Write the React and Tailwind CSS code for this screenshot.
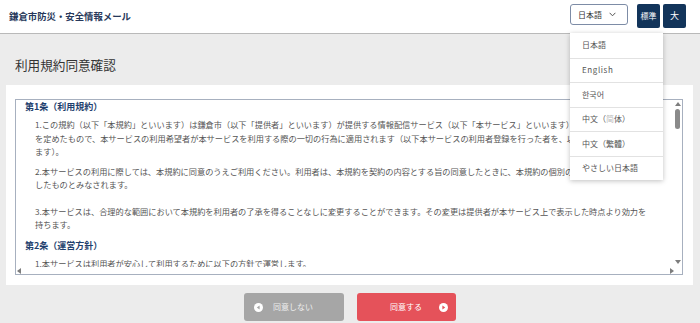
import React from 'react'

const languages = ['日本語', 'English', '한국어', '中文（简体）', '中文（繁體）', 'やさしい日本語']

const Arrow = ({ dir }) => {
  const points = {
    up: '0,4 3,0 6,4',
    down: '0,0 6,0 3,4',
    left: '4,0 4,6 0,3',
    right: '0,0 0,6 4,3',
  }
  const size = dir === 'up' || dir === 'down' ? { w: 6, h: 4 } : { w: 4, h: 6 }
  return (
    <svg width={size.w} height={size.h} viewBox={`0 0 ${size.w} ${size.h}`}>
      <polygon points={points[dir]} fill="#7d7d7d" />
    </svg>
  )
}

const CircleIcon = ({ dir, color }) => (
  <svg width="9" height="9" viewBox="0 0 9 9">
    <circle cx="4.5" cy="4.5" r="4.5" fill="#ffffff" />
    {dir === 'left' ? (
      <polygon points="5.6,2.6 5.6,6.4 2.8,4.5" fill={color} />
    ) : (
      <polygon points="3.4,2.6 3.4,6.4 6.2,4.5" fill={color} />
    )}
  </svg>
)

const LangMenu = () => (
  <div className="absolute left-0 top-[29px] z-20 w-[93px] bg-white shadow-[0_1px_5px_rgba(0,0,0,0.25)]">
    {languages.map((lang, i) => (
      <div
        key={lang}
        className={`flex h-[24.5px] items-center pl-[12px] text-[8px] text-[#555] ${
          i > 0 ? 'border-t border-[#e2e2e2]' : ''
        } ${lang === 'English' ? 'tracking-[0.6px]' : ''}`}
      >
        {lang === '中文（简体）' ? (
          <span>
            中文（<span className="text-[#b9b9b9]">简</span>体）
          </span>
        ) : (
          lang
        )}
      </div>
    ))}
  </div>
)

const Header = () => (
  <header className="flex h-[34px] justify-between border-b border-[#b9b9b9] bg-white">
    <h1 className="self-center pl-[9px] text-[9.4px] font-bold text-[#26385a]">
      鎌倉市防災・安全情報メール
    </h1>
    <div className="mr-[14px] mt-[4px] flex items-start">
      <div className="relative mr-[9px]">
        <div className="flex h-[21px] w-[58px] items-center justify-between rounded-[3px] border border-[#7d8ca6] bg-white pl-[7px] pr-[11px] text-[8px] text-[#333]">
          <span>日本語</span>
          <svg width="7" height="5" viewBox="0 0 7 5">
            <polyline points="0.6,0.8 3.5,3.8 6.4,0.8" fill="none" stroke="#555" strokeWidth="1" />
          </svg>
        </div>
        <LangMenu />
      </div>
      <button
        type="button"
        className="flex h-[24px] w-[23px] items-center justify-center rounded-[2px] bg-[#12345a] text-[8px] text-white"
      >
        標準
      </button>
      <button
        type="button"
        className="ml-[3px] flex h-[24px] w-[23px] items-center justify-center rounded-[2px] bg-[#12345a] text-[9px] text-white"
      >
        大
      </button>
    </div>
  </header>
)

const Terms = () => (
  <div className="flex h-[176px] flex-col border border-[#a7b0bf]">
    <div className="flex min-h-0 flex-1">
      <div className="min-w-0 flex-1 overflow-hidden pl-[9px] pr-[21px] text-[8.2px] leading-[13.5px] text-[#555]">
        <h3 className="text-[9px] font-bold leading-[14px] text-[#1f3f6e]">第1条（利用規約）</h3>
        <p className="mt-[4px] pl-[10px]">
          1.この規約（以下「本規約」といいます）は鎌倉市（以下「提供者」といいます）が提供する情報配信サービス（以下「本サービス」といいます）の利用に関する条件を定めたもので、本サービスの利用希望者が本サービスを利用する際の一切の行為に適用されます（以下本サービスの利用者登録を行った者を、以下「利用者」といいます）。
        </p>
        <p className="mt-[6px] pl-[10px]">
          2.本サービスの利用に際しては、本規約に同意のうえご利用ください。利用者は、本規約を契約の内容とする旨の同意したときに、本規約の個別の規定についても同意したものとみなされます。
        </p>
        <p className="mt-[13px] pl-[10px]">
          3.本サービスは、合理的な範囲において本規約を利用者の了承を得ることなしに変更することができます。その変更は提供者が本サービス上で表示した時点より効力を持ちます。
        </p>
        <h3 className="mt-[7px] text-[9px] font-bold leading-[14px] text-[#1f3f6e]">第2条（運営方針）</h3>
        <p className="mt-[4px] pl-[10px]">
          1.本サービスは利用者が安心して利用するために以下の方針で運営します。
        </p>
      </div>
      <div className="flex w-[9px] flex-col items-center pb-[3px] pt-[2px]">
        <Arrow dir="up" />
        <div className="mt-[3px] h-[20px] w-[5px] rounded-full bg-[#8a8a8a]" />
        <div className="flex-1" />
        <Arrow dir="down" />
      </div>
    </div>
    <div className="flex h-[7px] items-center justify-between pl-[1px] pr-[8px]">
      <Arrow dir="left" />
      <Arrow dir="right" />
    </div>
  </div>
)

export default function App() {
  return (
    <div className="h-[323px] w-full overflow-hidden bg-[#ececec] font-['Noto_Sans_CJK_JP','Noto_Sans_CJK_SC',sans-serif]">
      <Header />
      <main>
        <h2 className="pl-[15px] pt-[22px] text-[12.6px] leading-[18px] text-[#333]">利用規約同意確認</h2>
        <div className="ml-[6px] mr-[7px] mt-[11px] bg-white pb-[10px] pl-[9px] pr-[10px] pt-[14px]">
          <Terms />
        </div>
        <div className="flex justify-center gap-[13px] pt-[8px]">
          <button
            type="button"
            className="flex h-[28px] w-[100px] items-center gap-[10px] rounded-[3px] bg-[#a6a6a6] pl-[10px] text-[8px] text-[#eeeeee]"
          >
            <CircleIcon dir="left" color="#a6a6a6" />
            同意しない
          </button>
          <button
            type="button"
            className="flex h-[28px] w-[99px] items-center gap-[17px] rounded-[3px] bg-[#e5525a] pl-[33px] text-[8px] text-white"
          >
            同意する
            <CircleIcon dir="right" color="#e5525a" />
          </button>
        </div>
      </main>
    </div>
  )
}
